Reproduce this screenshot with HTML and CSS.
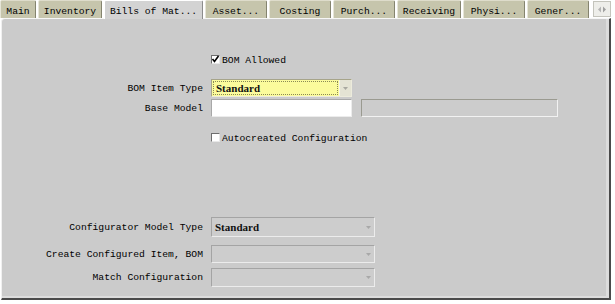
FILE: index.html
```html
<!DOCTYPE html>
<html>
<head>
<meta charset="utf-8">
<link rel="stylesheet" href="styles.css">
</head>
<body>
<div class="window">
  <div class="tabs">
    <div class="tab tab-narrow">Main</div>
    <div class="tab">Inventory</div>
    <div class="tab active">Bills of Mat...</div>
    <div class="tab">Asset...</div>
    <div class="tab">Costing</div>
    <div class="tab">Purch...</div>
    <div class="tab">Receiving</div>
    <div class="tab">Physi...</div>
    <div class="tab">Gener...</div>
    <div class="tab-scroll"><svg width="10" height="7" viewBox="0 0 10 7"><polygon points="4,0.5 4,6.5 1,3.5" fill="#b4b4b4"/><polygon points="6,0.5 6,6.5 9,3.5" fill="#a0a0a0"/></svg></div>
  </div>
  <div class="panel">
    <div class="row row-check r1">
      <span class="label"></span>
      <span class="check"><svg width="9" height="9" viewBox="0 0 9 9"><polyline points="1.5,4 3.5,6.5 7.5,1" fill="none" stroke="#000" stroke-width="1.6"/></svg></span>
      <span class="check-text">BOM Allowed</span>
    </div>
    <div class="row row-field r2">
      <span class="label">BOM Item Type</span>
      <div class="select select-active">
        <span class="select-value"><span class="focus-ring">Standard</span></span>
        <span class="select-btn"><svg width="5" height="3" viewBox="0 0 5 3"><polygon points="0,0 5,0 2.5,3" fill="#a8a8a0"/></svg></span>
      </div>
    </div>
    <div class="row row-field r3">
      <span class="label">Base Model</span>
      <div class="input"></div>
      <div class="input input-wide input-disabled"></div>
    </div>
    <div class="row row-check r4">
      <span class="label"></span>
      <span class="check"></span>
      <span class="check-text">Autocreated Configuration</span>
    </div>
    <div class="row row-field r5">
      <span class="label">Configurator Model Type</span>
      <div class="select select-disabled">
        <span class="select-value">Standard</span>
        <span class="select-arrow"><svg width="5" height="3" viewBox="0 0 5 3"><polygon points="0,0 5,0 2.5,3" fill="#a8a8a8"/></svg></span>
      </div>
    </div>
    <div class="row row-field r6">
      <span class="label">Create Configured Item, BOM</span>
      <div class="select select-disabled">
        <span class="select-value"></span>
        <span class="select-arrow"><svg width="5" height="3" viewBox="0 0 5 3"><polygon points="0,0 5,0 2.5,3" fill="#a8a8a8"/></svg></span>
      </div>
    </div>
    <div class="row row-field r7">
      <span class="label">Match Configuration</span>
      <div class="select select-disabled">
        <span class="select-value"></span>
        <span class="select-arrow"><svg width="5" height="3" viewBox="0 0 5 3"><polygon points="0,0 5,0 2.5,3" fill="#a8a8a8"/></svg></span>
      </div>
    </div>
  </div>
</div>
</body>
</html>
```
FILE: styles.css
```css
body {
  margin: 0;
  background: #ffffff;
  font-family: "Liberation Mono", "DejaVu Sans Mono", monospace;
  font-size: 9.7px;
  color: #000000;
}

.window {
  width: 611px;
  height: 300px;
  display: flex;
  flex-direction: column;
}

.tabs {
  display: flex;
  align-items: flex-end;
  gap: 2px;
  height: 18px;
  position: relative;
  z-index: 1;
}

.tab {
  box-sizing: border-box;
  height: 18px;
  min-width: 62px;
  padding: 3px 5px 0;
  background: #c6c5ac;
  border-top: 1px solid #dedccb;
  border-left: 1px solid #e6e5d8;
  border-right: 1px solid #85846f;
  border-radius: 2px 2px 0 0;
  display: flex;
  align-items: center;
  justify-content: center;
  white-space: nowrap;
}

.tab-narrow {
  min-width: 0;
  width: 36px;
}

.tab.active {
  height: 19px;
  margin-bottom: -1px;
  background: #d3d3d3;
  border-top: 1px solid #ffffff;
  border-left: 1px solid #ffffff;
  border-right: 1px solid #8c8c8c;
  padding-bottom: 1px;
}

.tab-scroll {
  box-sizing: border-box;
  width: 18px;
  height: 16px;
  margin-bottom: 1px;
  margin-left: 2px;
  background: #eeeeea;
  border: 1px solid #c4c4bc;
  display: flex;
  align-items: center;
  justify-content: center;
}

.panel {
  flex: 1;
  box-sizing: border-box;
  margin-left: 1px;
  background: #cbcbcb;
  border-top: 1px solid #f6f6f6;
  border-left: 1px solid #f0f0f0;
  border-right: 2px solid #4a4a4a;
  border-bottom: 2px solid #4a4a4a;
  border-radius: 4px 0 0 0;
  box-shadow: inset -3px -2px 0 #dcdcdc;
  display: flex;
  flex-direction: column;
}

.row {
  display: flex;
  align-items: center;
}

.label {
  width: 201px;
  flex-shrink: 0;
  text-align: right;
  white-space: nowrap;
  margin-right: 8px;
}

.row-check { height: 12px; }
.row-field { height: 18px; }

.r1 { margin-top: 34px; }
.r2 { margin-top: 14px; }
.r3 { margin-top: 2px; }
.r4 { margin-top: 14px; }
.r5 { margin-top: 74px; height: 20px; }
.r6 { margin-top: 8px; }
.r7 { margin-top: 5px; height: 19px; }

.check {
  box-sizing: border-box;
  width: 9px;
  height: 9px;
  background: #ffffff;
  border-top: 1px solid #6d6d6d;
  border-left: 1px solid #6d6d6d;
  border-right: 1px solid #e8e8e8;
  border-bottom: 1px solid #e8e8e8;
  position: relative;
}

.check svg {
  position: absolute;
  left: -1px;
  top: -1px;
}

.check-text {
  margin-left: 2px;
  padding-top: 2px;
}

.select,
.input {
  box-sizing: border-box;
  height: 100%;
  display: flex;
  align-items: stretch;
}

.select-active {
  width: 141px;
  border-top: 1px solid #a6a48a;
  border-left: 1px solid #a6a48a;
  border-right: 1px solid #ecebdc;
  border-bottom: 1px solid #ecebdc;
  background: #fbfb9c;
}

.select-value {
  flex: 1;
  display: flex;
  align-items: center;
  padding-left: 3px;
  font-family: "Liberation Serif", "Times New Roman", serif;
  font-weight: bold;
  font-size: 11px;
  color: #111;
}

.select-active .select-value {
  padding: 1px;
}

.focus-ring {
  flex: 1;
  height: 100%;
  box-sizing: border-box;
  border: 1px dotted #8a8a55;
  padding-left: 2px;
  display: flex;
  align-items: center;
}

.select-btn {
  width: 11px;
  background: #e4e3d4;
  border-left: 1px solid #f4f4ea;
  display: flex;
  align-items: center;
  justify-content: center;
}

.input {
  width: 141px;
  background: #ffffff;
  border-top: 1px solid #a8a8a8;
  border-left: 1px solid #a8a8a8;
  border-right: 1px solid #ececec;
  border-bottom: 1px solid #ececec;
}

.input-wide {
  width: 197px;
  margin-left: 9px;
}

.input-disabled {
  background: #cccccc;
  border-top: 1px solid #9a9a90;
  border-left: 1px solid #9a9a90;
  border-right: 1px solid #f2f2f2;
  border-bottom: 1px solid #f2f2f2;
}

.select-disabled {
  width: 164px;
  background: #cdcdcd;
  border-top: 1px solid #a4a4a4;
  border-left: 1px solid #a4a4a4;
  border-right: 1px solid #ececec;
  border-bottom: 1px solid #ececec;
}

.select-arrow {
  width: 11px;
  display: flex;
  align-items: center;
  justify-content: center;
}
```
